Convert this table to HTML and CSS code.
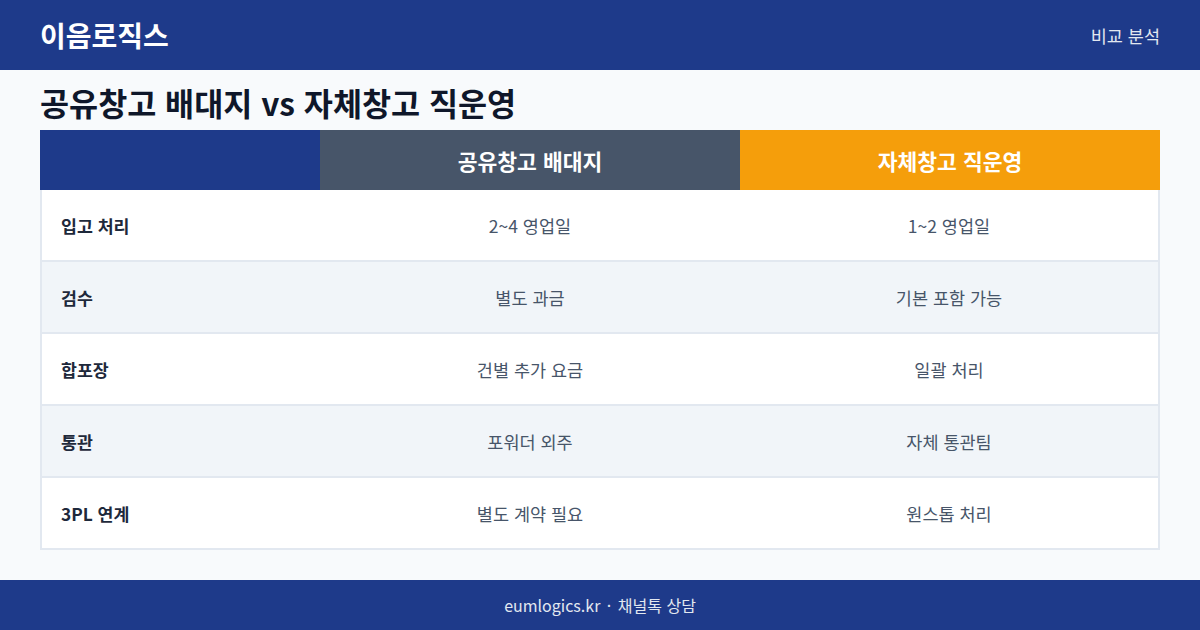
FILE: index.html
```html
<!DOCTYPE html>
<html lang="ko">
<head>
<meta charset="utf-8">
<link rel="stylesheet" href="styles.css">
</head>
<body>
<header class="topbar">
  <div class="logo">이음로직스</div>
  <div class="tag">비교 분석</div>
</header>
<main class="main">
  <h1 class="title">공유창고 배대지 vs 자체창고 직운영</h1>
  <div class="table">
    <div class="th th-blank"></div>
    <div class="th th-shared">공유창고 배대지</div>
    <div class="th th-own">자체창고 직운영</div>

    <div class="td label">입고 처리</div>
    <div class="td val">2~4 영업일</div>
    <div class="td val last">1~2 영업일</div>

    <div class="td label alt">검수</div>
    <div class="td val alt">별도 과금</div>
    <div class="td val last alt">기본 포함 가능</div>

    <div class="td label">합포장</div>
    <div class="td val">건별 추가 요금</div>
    <div class="td val last">일괄 처리</div>

    <div class="td label alt">통관</div>
    <div class="td val alt">포워더 외주</div>
    <div class="td val last alt">자체 통관팀</div>

    <div class="td label">3PL 연계</div>
    <div class="td val">별도 계약 필요</div>
    <div class="td val last">원스톱 처리</div>
  </div>
</main>
<footer class="footer">eumlogics.kr <span class="dot">·</span> 채널톡 상담</footer>
</body>
</html>
```
FILE: styles.css
```css
* { box-sizing: border-box; margin: 0; padding: 0; }
html, body { width: 1200px; height: 630px; overflow: hidden; }
body {
  font-family: "Noto Sans CJK KR", "Noto Sans", sans-serif;
  background: #f8fafc;
  display: flex;
  flex-direction: column;
}
.topbar {
  height: 70px;
  background: #1e3a8a;
  color: #fff;
  display: flex;
  align-items: center;
  justify-content: space-between;
  padding: 0 40px;
  flex: none;
}
.logo { font-size: 28px; font-weight: 700; }
.tag { font-size: 17.5px; color: #e2e8f0; }
.main { flex: 1; padding: 0 40px; }
.title {
  height: 60px;
  display: flex;
  align-items: center;
  padding-top: 4px;
  font-size: 31.6px;
  font-weight: 700;
  color: #0f172a;
}
.table {
  display: grid;
  grid-template-columns: 280px 420px 420px;
}
.th {
  height: 60px;
  display: flex;
  align-items: center;
  justify-content: center;
  color: #fff;
  font-size: 21.5px;
  font-weight: 700;
}
.th-blank { background: #1e3a8a; }
.th-shared { background: #475569; }
.th-own { background: #f59e0b; }
.td {
  height: 72px;
  display: flex;
  align-items: center;
  background: #fff;
  border-bottom: 2px solid #e2e8f0;
  font-size: 17.5px;
}
.td.alt { background: #f1f5f9; }
.label {
  border-left: 2px solid #e2e8f0;
  padding-left: 19px;
  font-size: 17.3px;
  font-weight: 700;
  color: #1e293b;
}
.val { justify-content: center; color: #475569; }
.last { border-right: 2px solid #e2e8f0; }
.footer {
  height: 50px;
  flex: none;
  background: #1e3a8a;
  color: #e2e8f0;
  font-size: 16px;
  display: flex;
  align-items: center;
  justify-content: center;
  white-space: pre;
}
.dot { margin: 0 2px; }
```
